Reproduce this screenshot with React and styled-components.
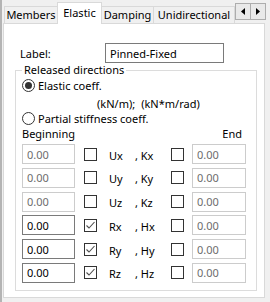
import styled, { createGlobalStyle } from 'styled-components';

const GlobalStyle = createGlobalStyle`
  html, body {
    margin: 0;
    padding: 0;
    background: #f0f0f0;
  }
  body {
    font-family: "Noto Sans", "Liberation Sans", sans-serif;
    font-size: 11px;
    color: #000;
  }
`;

const Window = styled.div`
  width: 270px;
  height: 302px;
  box-sizing: border-box;
  border-left: 2px solid #b4b4b4;
  padding: 0 5px 4px 1px;
  display: flex;
  flex-direction: column;
  overflow: hidden;
`;

const TabStrip = styled.div`
  height: 23px;
  display: flex;
  align-items: flex-end;
  padding-left: 1px;
  position: relative;
  z-index: 1;
`;

const Tab = styled.div`
  box-sizing: border-box;
  width: ${p => p.$w}px;
  height: ${p => (p.$active ? 22 : 17)}px;
  margin-bottom: ${p => (p.$active ? -1 : 0)}px;
  margin-left: ${p => (p.$first ? 0 : -1)}px;
  border: 1px solid #d9d9d9;
  border-bottom: none;
  background: ${p => (p.$active ? '#fff' : '#f0f0f0')};
  position: relative;
  z-index: ${p => (p.$active ? 2 : 1)};
  display: flex;
  align-items: center;
  justify-content: center;
  padding-bottom: ${p => (p.$active ? 2 : 0)}px;
  line-height: 14px;
  white-space: nowrap;
`;

const Scroller = styled.div`
  margin-left: auto;
  margin-right: -1px;
  align-self: flex-start;
  margin-top: 3px;
  display: flex;
  border: 1px solid #adadad;
  background: #e9e9e9;
`;

const ScrollBtn = styled.div`
  width: 14px;
  height: 15px;
  display: flex;
  align-items: center;
  justify-content: center;
  & + & {
    border-left: 1px solid #adadad;
  }
`;

const Panel = styled.div`
  flex: 1;
  background: #fff;
  border: 1px solid #d9d9d9;
  display: flex;
  flex-direction: column;
  padding: 19px 7px 0 11px;
`;

const LabelRow = styled.div`
  display: flex;
  align-items: center;
  padding-left: 5px;
  height: 20px;
`;

const LabelText = styled.span`
  width: 85px;
`;

const NameInput = styled.input`
  box-sizing: border-box;
  width: 119px;
  height: 20px;
  border: 1px solid #7a7a7a;
  padding: 0 4px;
  margin: 0;
  font: inherit;
  color: #000;
  outline: none;
`;

const Group = styled.fieldset`
  margin: 0;
  border: 1px solid #dcdcdc;
  padding: 0 10px 7px 6px;
  display: flex;
  flex-direction: column;
`;

const Legend = styled.legend`
  padding: 0 2px;
  line-height: 14px;
`;

const Line = styled.div`
  display: flex;
  align-items: center;
  height: ${p => p.$h}px;
  margin-top: ${p => p.$mt || 0}px;
  padding-left: ${p => p.$pl || 0}px;
  justify-content: ${p => p.$spread ? 'space-between' : 'flex-start'};
`;

const Radio = styled.span`
  box-sizing: border-box;
  width: 13px;
  height: 13px;
  border: 1px solid #333;
  border-radius: 50%;
  margin-right: 3px;
  display: flex;
  align-items: center;
  justify-content: center;
  &::after {
    content: '';
    width: 7px;
    height: 7px;
    border-radius: 50%;
    background: ${p => (p.$on ? '#333' : 'transparent')};
  }
`;

const Unit = styled.span`
  margin-right: 6px;
`;

const EndText = styled.span`
  margin-right: 4px;
`;

const Rows = styled.div`
  margin-top: 3px;
  display: flex;
  flex-direction: column;
  gap: 3.8px;
`;

const Row = styled.div`
  display: grid;
  grid-template-columns: 53px 9px 13px 12px 62px 13px 8px 54px;
  align-items: center;
  height: 20px;
`;

const Value = styled.input`
  box-sizing: border-box;
  width: 100%;
  height: 20px;
  margin: 0;
  border: 1px solid #7a7a7a;
  padding: 0 4px;
  font: inherit;
  color: #000;
  background: #fff;
  outline: none;
  &:disabled {
    border-color: #cccccc;
    color: #6d6d6d;
    -webkit-text-fill-color: #6d6d6d;
    background: #fff;
  }
`;

const Check = styled.span`
  box-sizing: border-box;
  width: 13px;
  height: 13px;
  border: 1px solid #333;
  background: #fff;
  display: flex;
  align-items: center;
  justify-content: center;
`;

const Axis = styled.span`
  display: flex;
  white-space: pre;
  padding-top: 2px;
`;

const AxisFirst = styled.span`
  width: 26px;
`;

const Slot = styled.span`
  grid-column: ${p => p.$col};
`;

const CheckBox = ({ checked, col }) => (
  <Slot $col={col}>
    <Check>
      {checked && (
        <svg width="11" height="11" viewBox="0 0 11 11">
          <polyline points="1.5,5.5 4,8 9.5,2" fill="none" stroke="#4d4d4d" strokeWidth="1.1" />
        </svg>
      )}
    </Check>
  </Slot>
);

const rows = [
  { a: 'Ux', b: 'Kx', on: false },
  { a: 'Uy', b: 'Ky', on: false },
  { a: 'Uz', b: 'Kz', on: false },
  { a: 'Rx', b: 'Hx', on: true },
  { a: 'Ry', b: 'Hy', on: true },
  { a: 'Rz', b: 'Hz', on: true },
];

const Arrow = ({ left }) => (
  <svg width="4" height="7" viewBox="0 0 4 7">
    <polygon points={left ? '4,0 0,3.5 4,7' : '0,0 4,3.5 0,7'} fill="#000" />
  </svg>
);

export default function App() {
  return (
    <>
      <GlobalStyle />
      <Window>
        <TabStrip>
          <Tab $w={54} $first>Members</Tab>
          <Tab $w={45} $active>Elastic</Tab>
          <Tab $w={53}>Damping</Tab>
          <Tab $w={82}>Unidirectional</Tab>
          <Scroller>
            <ScrollBtn><Arrow left /></ScrollBtn>
            <ScrollBtn><Arrow /></ScrollBtn>
          </Scroller>
        </TabStrip>
        <Panel>
          <LabelRow>
            <LabelText>Label:</LabelText>
            <NameInput readOnly value="Pinned-Fixed" />
          </LabelRow>
          <Group>
            <Legend>Released directions</Legend>
            <Line $h={16}>
              <Radio $on />Elastic coeff.
            </Line>
            <Line $h={16} $mt={2} $pl={75}>
              <Unit>(kN/m);</Unit>(kN*m/rad)
            </Line>
            <Line $h={15}>
              <Radio />Partial stiffness coeff.
            </Line>
            <Line $h={15} $spread>
              <span>Beginning</span>
              <EndText>End</EndText>
            </Line>
            <Rows>
              {rows.map(r => (
                <Row key={r.a}>
                  <Slot $col={1}><Value disabled={!r.on} readOnly value="0.00" /></Slot>
                  <CheckBox col={3} checked={r.on} />
                  <Slot $col={5}>
                    <Axis><AxisFirst>{r.a}</AxisFirst>, {r.b}</Axis>
                  </Slot>
                  <CheckBox col={6} />
                  <Slot $col={8}><Value disabled readOnly value="0.00" /></Slot>
                </Row>
              ))}
            </Rows>
          </Group>
        </Panel>
      </Window>
    </>
  );
}
